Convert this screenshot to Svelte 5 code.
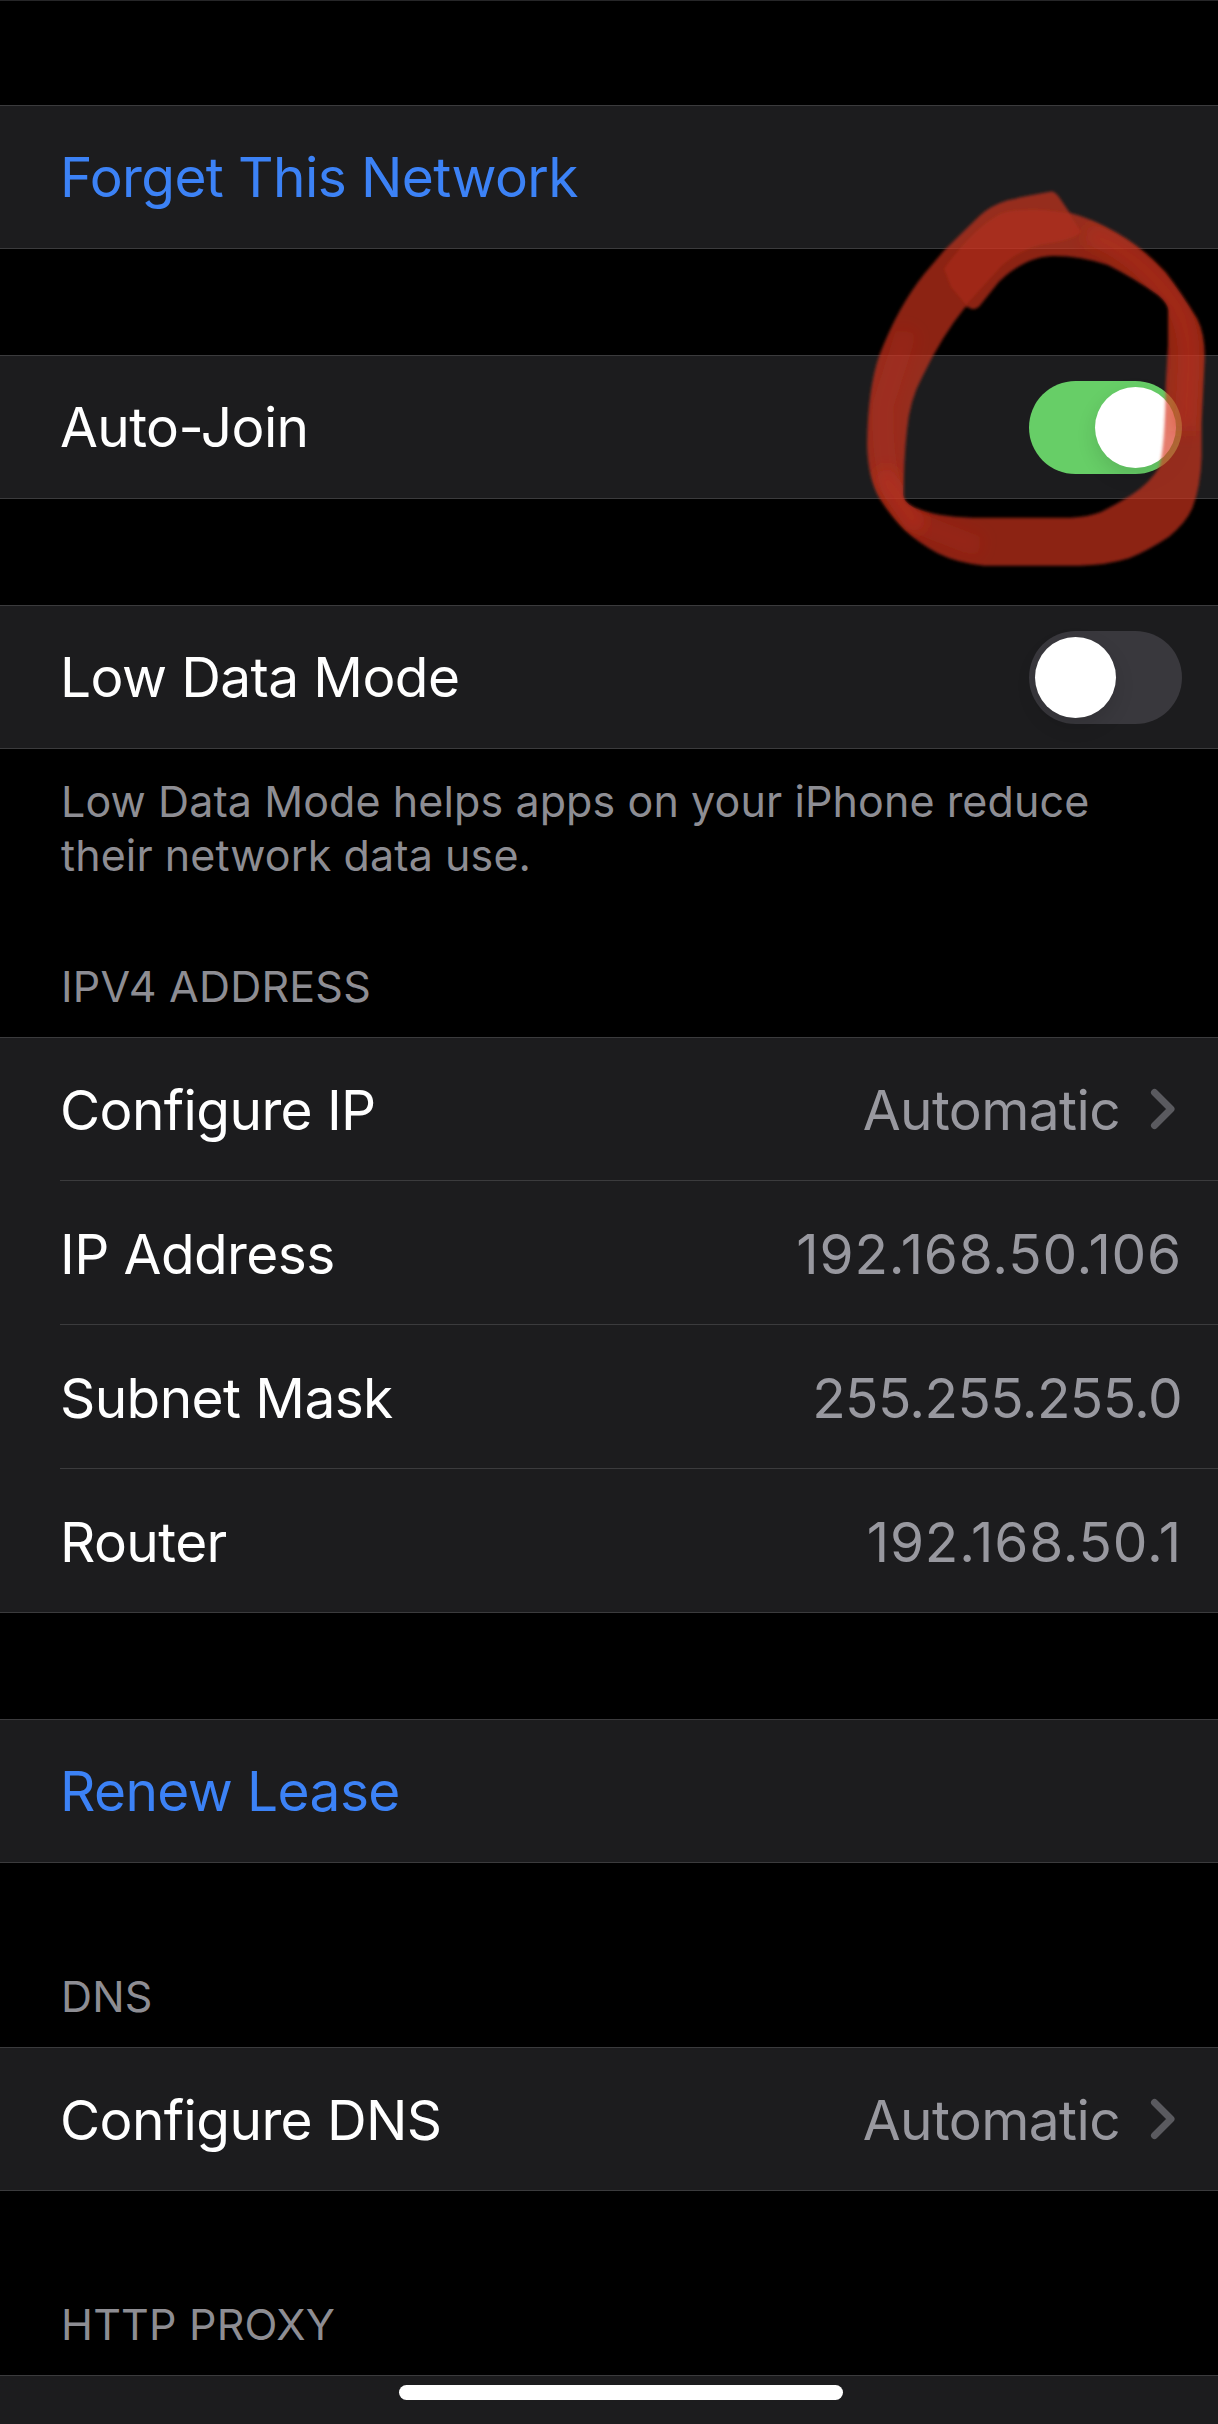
<script lang="ts">
	type Row = { label: string; value: string; link?: boolean };

	let autoJoin = $state(true);
	let lowDataMode = $state(false);

	const ipv4: Row[] = [
		{ label: 'Configure IP', value: 'Automatic', link: true },
		{ label: 'IP Address', value: '192.168.50.106' },
		{ label: 'Subnet Mask', value: '255.255.255.0' },
		{ label: 'Router', value: '192.168.50.1' }
	];

	const dns: Row[] = [{ label: 'Configure DNS', value: 'Automatic', link: true }];
</script>

{#snippet toggle(on: boolean, label: string, flip: () => void)}
	<button class="switch" class:on role="switch" aria-checked={on} aria-label={label} onclick={flip}>
		<span class="knob"></span>
	</button>
{/snippet}

{#snippet list(rows: Row[])}
	<div class="group list">
		{#each rows as row}
			<div class="row">
				<span class="label">{row.label}</span>
				<!-- Inter's "1" is narrow, so values with ones get looser tracking -->
				<span class="value" class:loose={row.value.includes('1')}>{row.value}</span>
				{#if row.link}
					<svg class="chevron" viewBox="0 0 26 42" aria-hidden="true">
						<path d="M4.5 4.5 21 21 4.5 37.5" />
					</svg>
				{/if}
			</div>
		{/each}
	</div>
{/snippet}

<main class="screen">
	<div class="group">
		<div class="row"><button class="action">Forget This Network</button></div>
	</div>

	<div class="group">
		<div class="row">
			<span class="label">Auto-Join</span>
			{@render toggle(autoJoin, 'Auto-Join', () => (autoJoin = !autoJoin))}
		</div>
	</div>

	<div class="group">
		<div class="row">
			<span class="label">Low Data Mode</span>
			{@render toggle(lowDataMode, 'Low Data Mode', () => (lowDataMode = !lowDataMode))}
		</div>
	</div>
	<p class="note">Low Data Mode helps apps on your iPhone reduce<br />their network data use.</p>

	<h2 class="ipv4-title">IPV4 ADDRESS</h2>
	{@render list(ipv4)}

	<div class="group">
		<div class="row"><button class="action">Renew Lease</button></div>
	</div>

	<h2>DNS</h2>
	{@render list(dns)}

	<h2>HTTP PROXY</h2>
	<div class="group last"></div>

	<!-- hand-drawn marker ring around the Auto-Join switch -->
	<svg class="marker" viewBox="0 0 1134 1230" aria-hidden="true">
		<defs>
			<filter id="soft" x="-10%" y="-10%" width="120%" height="120%">
				<feMorphology operator="erode" radius="4" />
				<feGaussianBlur stdDeviation="5" />
			</filter>
			<filter id="glow" x="-30%" y="-30%" width="160%" height="160%">
				<feGaussianBlur stdDeviation="24" />
			</filter>
			<clipPath id="ring">
				<path
					clip-rule="evenodd"
					d="M635 64Q650 66 656 79L690 127Q760 145 828 186Q908 230 976 305Q1026 370 1070 444Q1095 492 1092 570L1083 760V860Q1080 948 1056 1013Q1036 1057 987 1096Q928 1136 868 1160Q798 1182 720 1182H430Q350 1175 292 1145Q238 1116 194 1076Q154 1036 120 982Q85 923 83 820Q85 652 120 552Q175 407 254 308L314 238L418 136Q453 105 502 90Q562 75 635 64ZM640 253Q558 255 476 331L420 403Q400 418 380 403Q305 492 245 618Q207 688 199 780Q189 870 189 970Q189 993 222 1010Q288 1040 400 1042H690Q742 1040 782 1025Q833 1000 873 974Q934 933 960 888Q977 820 979 640L986 520V420Q985 397 954 371Q882 320 802 280Q722 253 640 253Z"
				/>
			</clipPath>
		</defs>
		<path
			class="ink"
			fill-rule="evenodd"
			d="M635 58Q650 60 660 75L692 122Q760 140 830 180Q910 225 980 300Q1030 365 1075 440Q1100 490 1097 570L1088 760V860Q1085 950 1060 1015Q1040 1060 990 1100Q930 1140 870 1165Q800 1187 720 1187H430Q350 1180 290 1150Q235 1120 190 1080Q150 1040 115 985Q80 925 78 820Q80 650 115 550Q170 405 250 305L310 235L415 132Q450 100 500 85Q560 70 635 58ZM640 258Q560 260 480 335L420 410Q400 425 380 410Q310 495 250 620Q212 690 204 780Q194 870 194 970Q194 990 225 1005Q290 1035 400 1037H690Q740 1035 780 1020Q830 995 870 970Q930 930 955 885Q972 820 974 640L981 520V420Q980 400 950 375Q880 325 800 285Q720 258 640 258Z"
		/>
		<path
			class="overlap"
			d="M308 292Q400 165 480 125Q560 100 690 124L728 182Q715 205 640 218Q560 225 490 285L378 408L330 350Z"
		/>
		<g clip-path="url(#ring)">
			<path class="pressed" d="M740 185Q890 240 1000 390Q1055 470 1045 600L1035 780" />
			<path class="pressed faint" d="M200 480L130 700Q120 960 215 1050L420 1130" />
			<path class="pressed" d="M120 900L240 1075" />
		</g>
	</svg>

	<div class="home-indicator"></div>
</main>

<style>
	:global(body) {
		margin: 0;
		background: #000;
	}

	.screen {
		position: relative;
		box-sizing: border-box;
		width: 1218px;
		height: 2424px;
		padding-top: 104px;
		overflow: hidden;
		border-top: 1px solid #262628;
		background: #000;
		color: #fff;
		font-family: Inter, 'Liberation Sans', sans-serif;
		font-size: 55px;
		letter-spacing: -0.6px;
	}

	.group {
		border-top: 1px solid #3b3b3d;
		border-bottom: 1px solid #3b3b3d;
		background: #1c1c1e;
	}

	.group + .group {
		margin-top: 106px;
	}

	.row {
		display: flex;
		align-items: center;
		box-sizing: border-box;
		height: 142px;
		margin-left: 60px;
		padding-right: 36px;
	}

	.row + .row {
		height: 144px;
		border-top: 1px solid #3b3b3d;
	}

	.label {
		flex: 1;
		white-space: nowrap;
	}

	.value {
		color: #98989f;
		white-space: nowrap;
	}

	.list .label,
	.list .value {
		padding-top: 1px;
	}

	.list .row + .row .label,
	.list .row + .row .value {
		padding-top: 2px;
	}

	.loose {
		letter-spacing: 0.8px;
	}

	.action {
		padding: 0;
		border: 0;
		background: none;
		color: #3c82f6;
		font: inherit;
		letter-spacing: inherit;
	}

	.chevron {
		width: 26px;
		height: 42px;
		margin: 0 6px 0 30px;
		fill: none;
		stroke: #5a5a5f;
		stroke-width: 7;
		stroke-linecap: round;
		stroke-linejoin: round;
	}

	.switch {
		display: flex;
		width: 153px;
		height: 93px;
		padding: 6px;
		border: 0;
		border-radius: 47px;
		background: #39383d;
	}

	.knob {
		width: 81px;
		height: 81px;
		border-radius: 50%;
		background: #fff;
		box-shadow: 0 8px 20px rgba(0, 0, 0, 0.12);
	}

	.switch.on {
		justify-content: flex-end;
		background: #67ce67;
	}

	.note {
		margin: 25px 0 0 61px;
		color: #8d8d93;
		font-size: 43px;
		line-height: 54px;
		letter-spacing: 0.1px;
	}

	h2 {
		margin: 106px 0 0 61px;
		padding-bottom: 24px;
		color: #8d8d93;
		font-size: 43px;
		font-weight: 400;
		line-height: 54px;
		letter-spacing: 0.2px;
	}

	.ipv4-title {
		margin-top: 77px;
	}

	.last {
		height: 60px;
	}

	.marker {
		position: absolute;
		top: 170px;
		left: 840px;
		width: 378px;
		height: 410px;
		pointer-events: none;
	}

	.ink {
		fill: rgba(215, 52, 26, 0.65);
		filter: url(#soft);
	}

	.overlap {
		fill: rgba(215, 56, 32, 0.26);
		filter: url(#soft);
	}

	.pressed {
		fill: none;
		stroke: rgba(205, 50, 30, 0.36);
		stroke-width: 64;
		filter: url(#glow);
	}

	.faint {
		stroke: rgba(205, 50, 30, 0.16);
	}

	.home-indicator {
		position: absolute;
		top: 2384px;
		left: 399px;
		width: 444px;
		height: 15px;
		border-radius: 8px;
		background: #fff;
	}
</style>
